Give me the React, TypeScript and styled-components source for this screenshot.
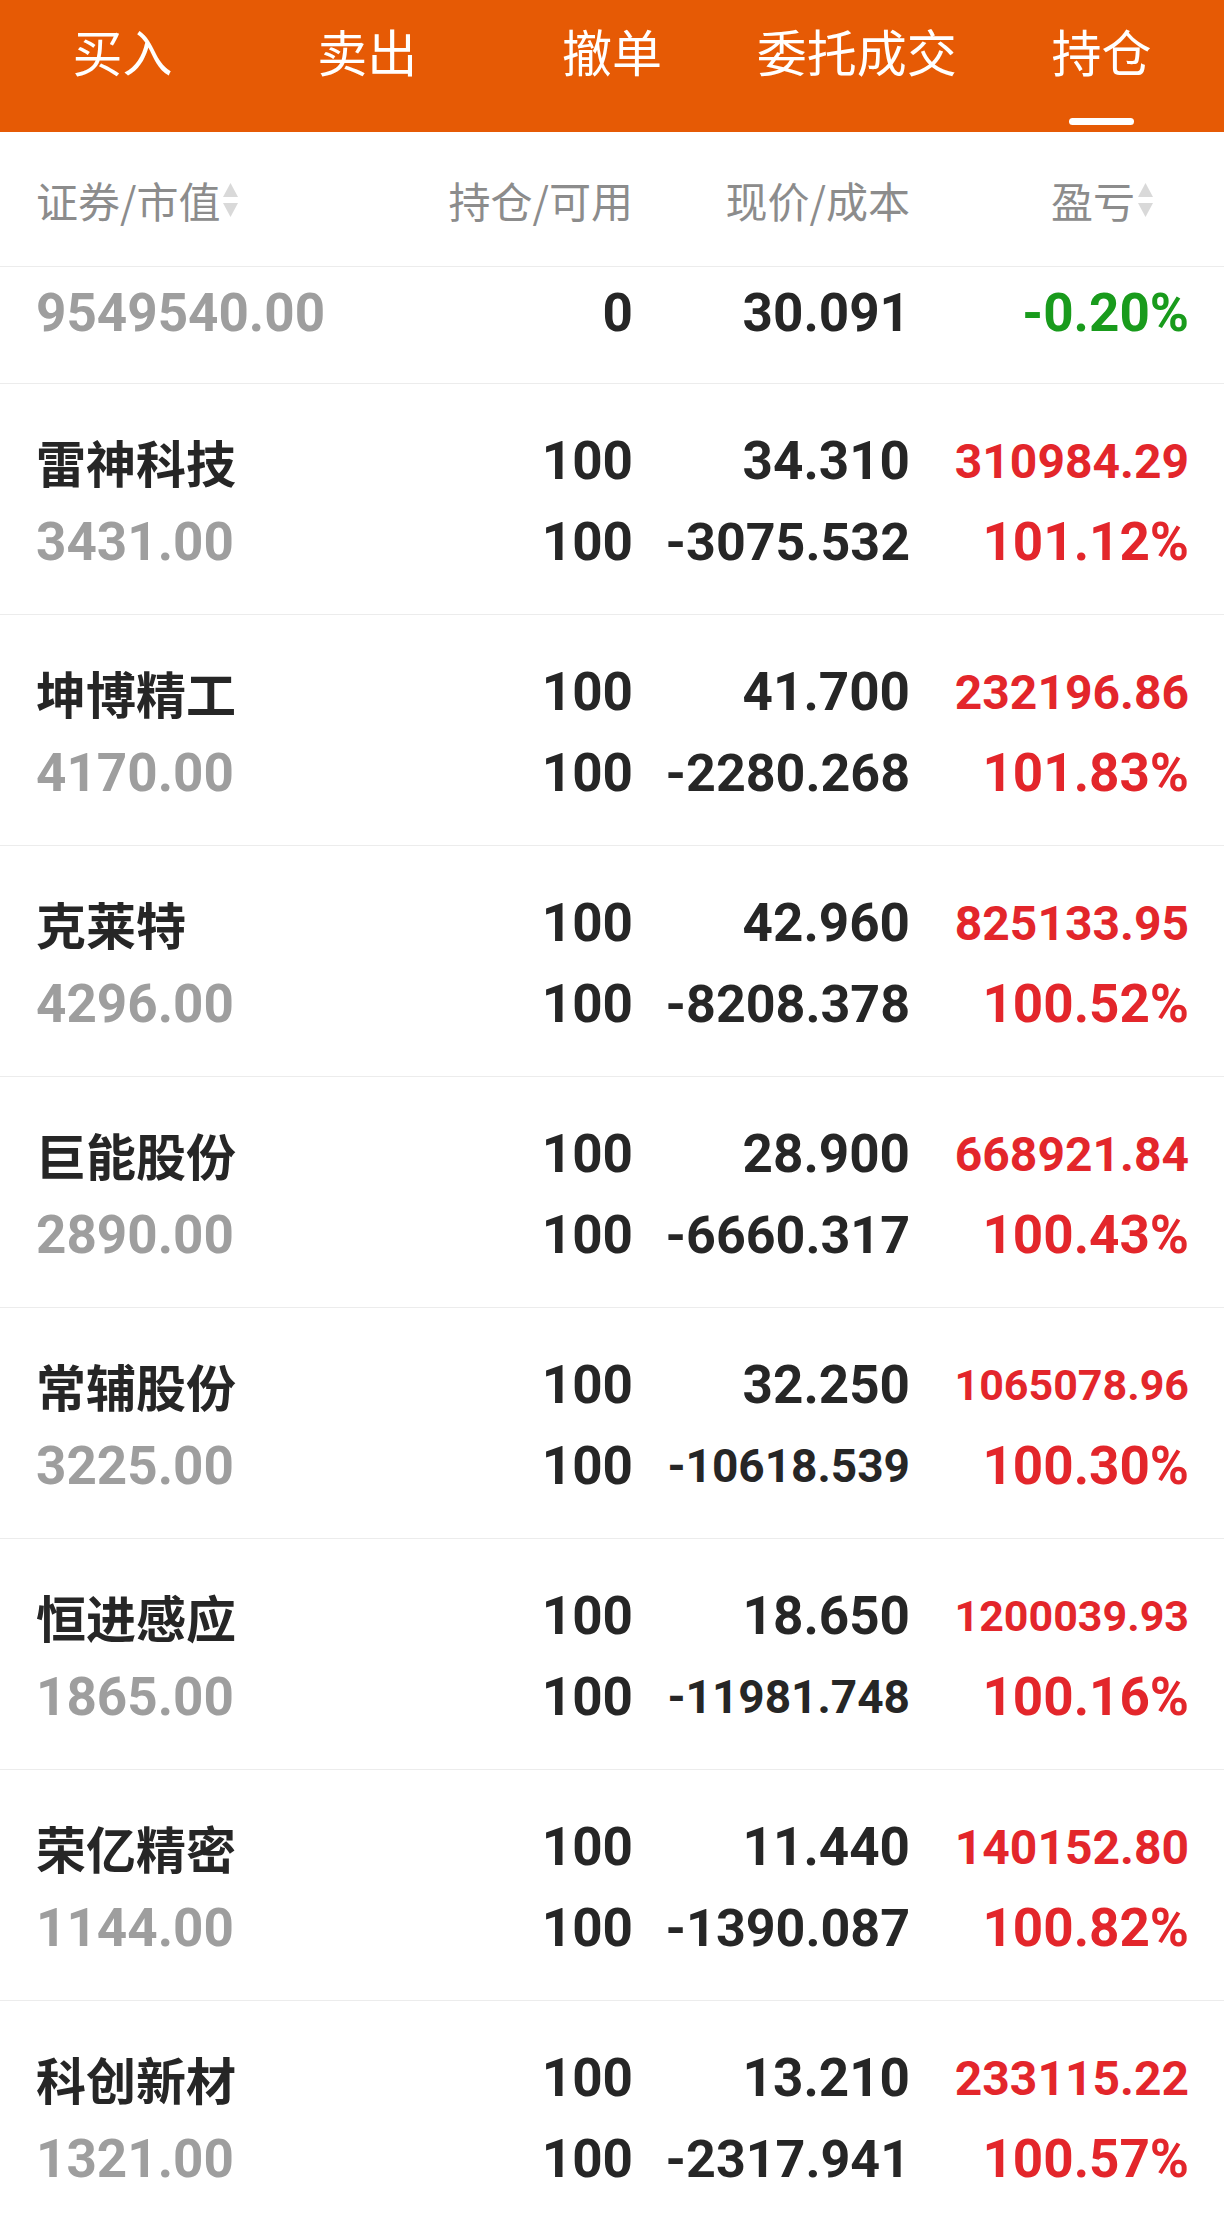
import React from 'react';
import styled, { createGlobalStyle } from 'styled-components';

const GlobalStyle = createGlobalStyle`
  html, body {
    margin: 0;
    padding: 0;
    background: #ffffff;
  }
  body {
    font-family: "Noto Sans CJK SC", "Noto Sans", sans-serif;
    overflow: hidden;
  }
`;

const CJK = `"Noto Sans CJK SC", "Noto Sans", sans-serif`;
const NUM = `Roboto, "Noto Sans", sans-serif`;

const RED = '#e3262b';
const GREEN = '#199b1c';
const DARK = '#262626';
const GRAY = '#9e9e9e';

type Position = {
  name: string;
  value: string;
  hold: string;
  avail: string;
  price: string;
  cost: string;
  profit: string;
  ratio: string;
};

const tabs = ['买入', '卖出', '撤单', '委托成交', '持仓'];

const positions: Position[] = [
  { name: '雷神科技', value: '3431.00', hold: '100', avail: '100', price: '34.310', cost: '-3075.532', profit: '310984.29', ratio: '101.12%' },
  { name: '坤博精工', value: '4170.00', hold: '100', avail: '100', price: '41.700', cost: '-2280.268', profit: '232196.86', ratio: '101.83%' },
  { name: '克莱特', value: '4296.00', hold: '100', avail: '100', price: '42.960', cost: '-8208.378', profit: '825133.95', ratio: '100.52%' },
  { name: '巨能股份', value: '2890.00', hold: '100', avail: '100', price: '28.900', cost: '-6660.317', profit: '668921.84', ratio: '100.43%' },
  { name: '常辅股份', value: '3225.00', hold: '100', avail: '100', price: '32.250', cost: '-10618.539', profit: '1065078.96', ratio: '100.30%' },
  { name: '恒进感应', value: '1865.00', hold: '100', avail: '100', price: '18.650', cost: '-11981.748', profit: '1200039.93', ratio: '100.16%' },
  { name: '荣亿精密', value: '1144.00', hold: '100', avail: '100', price: '11.440', cost: '-1390.087', profit: '140152.80', ratio: '100.82%' },
  { name: '科创新材', value: '1321.00', hold: '100', avail: '100', price: '13.210', cost: '-2317.941', profit: '233115.22', ratio: '100.57%' },
];

// rough Roboto Bold advance widths in em, used to shrink long numbers into their column
const emWidth = (text: string) =>
  text.split('').reduce((sum, ch) => {
    if (ch === '.') return sum + 0.27;
    if (ch === '-') return sum + 0.29;
    if (ch === '%') return sum + 0.73;
    return sum + 0.5615;
  }, 0);

const fit = (text: string, max: number, base = 53) => Math.min(base, Math.floor(max / emWidth(text)));

const TabBar = styled.nav`
  display: grid;
  grid-template-columns: repeat(5, 1fr);
  height: 132px;
  background: #e65a05;
`;

const Tab = styled.div<{ $active?: boolean }>`
  display: flex;
  flex-direction: column;
  align-items: center;
  padding-top: 15px;
  color: #ffffff;
  font-family: ${CJK};
  font-size: 50px;
  line-height: 70px;
  font-weight: 400;
  &::after {
    content: '';
    display: block;
    margin-top: 33px;
    width: 65px;
    height: 7px;
    border-radius: 4px;
    background: ${(p) => (p.$active ? '#ffffff' : 'transparent')};
  }
`;

const Grid = styled.div`
  display: grid;
  grid-template-columns: 1fr 260px 277px 279px;
  padding: 0 35px 0 36px;
  border-bottom: 1px solid #ececec;
`;

const HeadRow = styled(Grid)`
  align-items: center;
  padding-top: 2px;
  box-sizing: border-box;
  height: 135px;
`;

const HeadCell = styled.div<{ $right?: boolean; $pad?: number }>`
  display: flex;
  align-items: center;
  justify-content: ${(p) => (p.$right ? 'flex-end' : 'flex-start')};
  padding-right: ${(p) => p.$pad ?? 0}px;
  color: #8c8c8c;
  font-family: ${CJK};
  font-size: 42px;
  line-height: 56px;
`;

const SumRow = styled(Grid)`
  padding-top: 6px;
  padding-bottom: 29px;
`;

const StockRow = styled(Grid)`
  padding-top: 37px;
  padding-bottom: 31px;
`;

const Col = styled.div<{ $right?: boolean }>`
  display: flex;
  flex-direction: column;
  align-items: ${(p) => (p.$right ? 'flex-end' : 'flex-start')};
  min-width: 0;
`;

const Name = styled.div`
  height: 81px;
  line-height: 81px;
  font-family: ${CJK};
  font-weight: 700;
  font-size: 50px;
  color: ${DARK};
  white-space: nowrap;
`;

const Num = styled.div<{ $color?: string; $size?: number }>`
  height: 81px;
  line-height: 81px;
  font-family: ${NUM};
  font-weight: 700;
  font-size: ${(p) => p.$size ?? 53}px;
  color: ${(p) => p.$color ?? DARK};
  white-space: nowrap;
`;

const SortIcon = () => (
  <svg width="17" height="40" viewBox="0 0 17 40" style={{ marginLeft: 2 }}>
    <path d="M8.5 3 L16 17 L1 17 Z" fill="#d9d9d9" />
    <path d="M1 23 L16 23 L8.5 37 Z" fill="#d9d9d9" />
  </svg>
);

export default function App() {
  return (
    <>
      <GlobalStyle />
      <TabBar>
        {tabs.map((t, i) => (
          <Tab key={t} $active={i === tabs.length - 1}>
            {t}
          </Tab>
        ))}
      </TabBar>
      <HeadRow>
        <HeadCell>
          证券/市值
          <SortIcon />
        </HeadCell>
        <HeadCell $right>持仓/可用</HeadCell>
        <HeadCell $right>现价/成本</HeadCell>
        <HeadCell $right $pad={35}>
          盈亏
          <SortIcon />
        </HeadCell>
      </HeadRow>
      <SumRow>
        <Col>
          <Num $color={GRAY}>9549540.00</Num>
        </Col>
        <Col $right>
          <Num>0</Num>
        </Col>
        <Col $right>
          <Num>30.091</Num>
        </Col>
        <Col $right>
          <Num $color={GREEN}>-0.20%</Num>
        </Col>
      </SumRow>
      {positions.map((p) => (
        <StockRow key={p.name}>
          <Col>
            <Name>{p.name}</Name>
            <Num $color={GRAY}>{p.value}</Num>
          </Col>
          <Col $right>
            <Num>{p.hold}</Num>
            <Num>{p.avail}</Num>
          </Col>
          <Col $right>
            <Num $size={fit(p.price, 237)}>{p.price}</Num>
            <Num $size={fit(p.cost, 237)}>{p.cost}</Num>
          </Col>
          <Col $right>
            <Num $color={RED} $size={fit(p.profit, 233)}>{p.profit}</Num>
            <Num $color={RED} $size={fit(p.ratio, 233)}>{p.ratio}</Num>
          </Col>
        </StockRow>
      ))}
    </>
  );
}
